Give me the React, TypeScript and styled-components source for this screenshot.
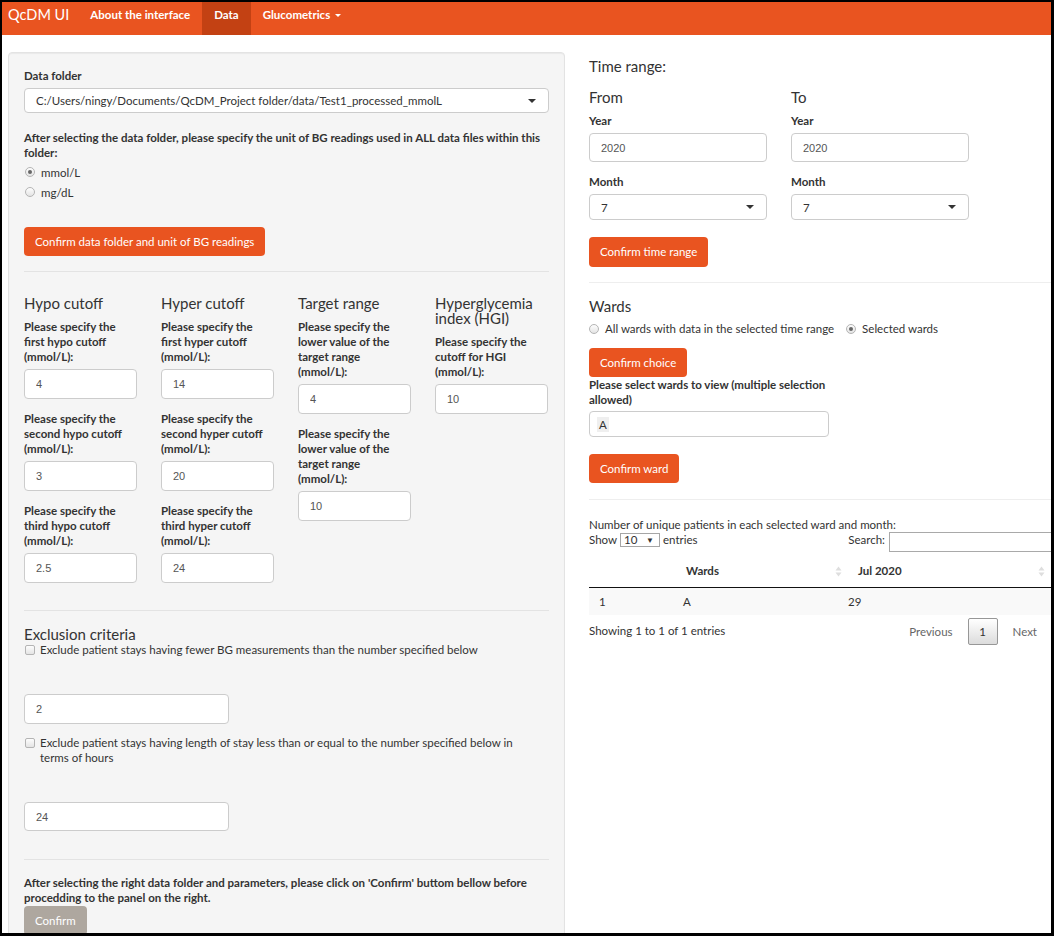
import React from 'react';
import styled, { createGlobalStyle, css } from 'styled-components';

const GlobalStyle = createGlobalStyle`
  html, body { margin: 0; padding: 0; background: #000; }
  * { box-sizing: border-box; }
`;

const Frame = styled.div`
  width: 1054px;
  height: 936px;
  border-style: solid;
  border-color: #000;
  border-width: 2px 3px 3px 2px;
  background: #fff;
  overflow: hidden;
  font-family: Lato, "Open Sans", sans-serif;
  font-size: 11.5px;
  line-height: 15px;
  color: #333;
`;

const Navbar = styled.nav`
  height: 33px;
  background: #e95420;
  display: flex;
  align-items: stretch;
`;

const Brand = styled.div`
  padding: 4px 9px 0 6px;
  font-size: 14.5px;
  line-height: 18px;
  color: #fff;
`;

const NavItem = styled.div<{ $active?: boolean }>`
  padding: 4px 12px 0;
  font-size: 11.5px;
  font-weight: 700;
  line-height: 18px;
  color: #fff;
  display: flex;
  align-items: flex-start;
  gap: 5px;
  ${(p) => p.$active && css`background: #c34113;`}
`;

const NavCaret = styled.span`
  margin-top: 8px;
  border-left: 3.5px solid transparent;
  border-right: 3.5px solid transparent;
  border-top: 3.5px solid #fff;
`;

const Main = styled.div`
  display: flex;
  align-items: flex-start;
  gap: 24px;
  padding: 17px 0 0 6px;
`;

const Well = styled.section`
  flex: none;
  width: 557px;
  background: #f5f5f5;
  border: 1px solid #e3e3e3;
  border-radius: 4px;
  box-shadow: inset 0 1px 1px rgba(0, 0, 0, 0.05);
  padding: 15px 15px 40px;
  display: flex;
  flex-direction: column;
`;

const FieldLabel = styled.div<{ $mt?: number; $mb?: number }>`
  font-weight: 700;
  line-height: 15px;
  margin-top: ${(p) => p.$mt ?? 0}px;
  margin-bottom: ${(p) => p.$mb ?? 5}px;
`;

const SelectBox = styled.div<{ $w?: number; $h?: number }>`
  width: ${(p) => (p.$w ? `${p.$w}px` : '100%')};
  height: ${(p) => p.$h ?? 25}px;
  background: #fff;
  border: 1px solid #ccc;
  border-radius: 4px;
  display: flex;
  align-items: center;
  justify-content: space-between;
  padding: 0 12px 0 11px;
  color: #333;
  font-size: 11.5px;
`;

const SelectCaret = styled.span`
  border-left: 4px solid transparent;
  border-right: 4px solid transparent;
  border-top: 4.5px solid #333;
`;

const RadioGroup = styled.div<{ $inline?: boolean }>`
  display: flex;
  flex-direction: ${(p) => (p.$inline ? 'row' : 'column')};
  gap: ${(p) => (p.$inline ? '12px' : '0')};
`;

const RadioRow = styled.label<{ $h?: number }>`
  display: flex;
  align-items: center;
  gap: 6px;
  height: ${(p) => p.$h ?? 20}px;
  font-weight: 400;
`;

const RadioDot = styled.span<{ $checked?: boolean; $ml?: number }>`
  width: 10px;
  height: 10px;
  margin-left: ${(p) => p.$ml ?? 0}px;
  border-radius: 50%;
  border: 1px solid #b4b4b4;
  background: linear-gradient(#fdfdfd, #e4e4e4);
  display: flex;
  align-items: center;
  justify-content: center;
  flex: none;
  &::after {
    content: '';
    width: 4px;
    height: 4px;
    border-radius: 50%;
    background: ${(p) => (p.$checked ? '#666' : 'transparent')};
  }
`;

const Button = styled.button<{ $gray?: boolean; $mt?: number; $h?: number }>`
  align-self: flex-start;
  height: ${(p) => p.$h ?? 29}px;
  margin-top: ${(p) => p.$mt ?? 0}px;
  padding: 0 11px;
  border: none;
  border-radius: 4px;
  background: ${(p) => (p.$gray ? '#aea79f' : '#e95420')};
  color: #fff;
  font-family: inherit;
  font-size: 11.5px;
  line-height: 15px;
  cursor: pointer;
`;

const Rule = styled.hr<{ $mt: number; $mb: number; $light?: boolean }>`
  border: none;
  border-top: 1px solid ${(p) => (p.$light ? '#eeeeee' : '#e3e3e3')};
  margin: ${(p) => p.$mt}px 0 ${(p) => p.$mb}px;
  width: 100%;
`;

const CutoffGrid = styled.div`
  display: grid;
  grid-template-columns: repeat(4, 113px);
  column-gap: 24px;
  align-items: start;
`;

const CutoffColumn = styled.div`
  display: flex;
  flex-direction: column;
`;

const ColHeading = styled.h4<{ $mb?: number }>`
  margin: 0 0 ${(p) => p.$mb ?? 8}px;
  font-size: 15px;
  font-weight: 400;
  line-height: 15px;
  color: #333;
`;

const TextInput = styled.input<{ $w?: number; $h?: number; $mt?: number; $mb?: number }>`
  width: ${(p) => (p.$w ? `${p.$w}px` : '100%')};
  height: ${(p) => p.$h ?? 30}px;
  margin: ${(p) => p.$mt ?? 0}px 0 ${(p) => p.$mb ?? 0}px;
  padding: 0 11px;
  background: #fff;
  border: 1px solid #ccc;
  border-radius: 4px;
  font-family: "Liberation Sans", Arial, sans-serif;
  font-size: 11px;
  color: #555;
  outline: none;
`;

const CheckRow = styled.label<{ $mt?: number }>`
  display: flex;
  align-items: flex-start;
  gap: 5px;
  margin-top: ${(p) => p.$mt ?? 0}px;
  line-height: 15px;
`;

const CheckBox = styled.span`
  flex: none;
  width: 10px;
  height: 10px;
  margin: 2.5px 0 0 1px;
  border: 1px solid #b4b4b4;
  border-radius: 2px;
  background: linear-gradient(#fdfdfd, #e4e4e4);
`;

const RightCol = styled.section`
  flex: 1;
  min-width: 0;
  padding-top: 6px;
  display: flex;
  flex-direction: column;
`;

const SectionTitle = styled.h3<{ $mb: number; $lh?: number }>`
  margin: 0 0 ${(p) => p.$mb}px;
  font-size: 15px;
  font-weight: 400;
  line-height: ${(p) => p.$lh ?? 15}px;
  color: #333;
`;

const TwoCols = styled.div`
  display: grid;
  grid-template-columns: 178px 178px;
  column-gap: 24px;
`;

const FieldCol = styled.div`
  display: flex;
  flex-direction: column;
`;

const MultiBox = styled.div`
  width: 240px;
  height: 26px;
  margin-top: 4px;
  background: #fff;
  border: 1px solid #ccc;
  border-radius: 4px;
  display: flex;
  align-items: center;
  padding: 0 7px;
`;

const Chip = styled.span`
  background: #efefef;
  color: #333;
  padding: 0 2px;
  line-height: 15px;
`;

const PlainText = styled.div<{ $lh?: number }>`
  line-height: ${(p) => p.$lh ?? 15}px;
`;

const TableControls = styled.div`
  display: flex;
  justify-content: space-between;
  align-items: flex-start;
  height: 20px;
`;

const ControlGroup = styled.div<{ $top?: boolean }>`
  display: flex;
  align-items: ${(p) => (p.$top ? 'flex-start' : 'center')};
  gap: 3px;
  line-height: 15px;
`;

const LengthSelect = styled.span`
  width: 40px;
  height: 14px;
  border: 1px solid #a6a6a6;
  display: inline-flex;
  align-items: center;
  justify-content: space-between;
  padding: 0 5px 0 3px;
  font-size: 11.5px;
  line-height: 12px;
  & > small { font-size: 8px; }
`;

const SearchInput = styled.input`
  width: 162px;
  height: 20px;
  margin-left: 1px;
  border: 1px solid #a9a9a9;
  border-right: none;
  outline: none;
  background: #fff;
`;

const HeadRow = styled.div`
  margin-top: 3px;
  display: grid;
  grid-template-columns: 87px 172px 1fr;
  border-bottom: 1px solid #111;
  font-weight: 700;
`;

const HeadCell = styled.div`
  padding: 10px 6px 10px 10px;
  line-height: 12px;
  display: flex;
  justify-content: space-between;
  align-items: center;
`;

const BodyRow = styled.div`
  display: grid;
  grid-template-columns: 84px 165px 1fr;
  background: #f9f9f9;
`;

const BodyCell = styled.div`
  padding: 6px 10px;
  line-height: 15px;
  color: #333;
`;

const TableFooter = styled.div`
  margin-top: 3px;
  height: 27px;
  display: flex;
  align-items: center;
  justify-content: space-between;
  & > span { margin-top: -3px; }
`;

const Pager = styled.div`
  display: flex;
  align-items: center;
  gap: 15px;
  padding-right: 14px;
`;

const PageLink = styled.span`
  color: #666;
`;

const PageCurrent = styled.span`
  width: 30px;
  height: 27px;
  border: 1px solid #979797;
  border-radius: 2px;
  background: linear-gradient(#fff, #dcdcdc);
  display: flex;
  align-items: center;
  justify-content: center;
  color: #333;
`;

const SortIcon = () => (
  <svg width="7" height="11" viewBox="0 0 7 11" aria-hidden="true">
    <path d="M3.5 0.5 L6.5 4.5 L0.5 4.5 Z" fill="#dedede" />
    <path d="M3.5 10.5 L6.5 6.5 L0.5 6.5 Z" fill="#dedede" />
  </svg>
);

type Field = { label: React.ReactNode; value: string };
type Column = { heading: React.ReactNode; fields: Field[] };

const columns: Column[] = [
  {
    heading: 'Hypo cutoff',
    fields: [
      { label: <>Please specify the<br />first hypo cutoff<br />(mmol/L):</>, value: '4' },
      { label: <>Please specify the<br />second hypo cutoff<br />(mmol/L):</>, value: '3' },
      { label: <>Please specify the<br />third hypo cutoff<br />(mmol/L):</>, value: '2.5' },
    ],
  },
  {
    heading: 'Hyper cutoff',
    fields: [
      { label: <>Please specify the<br />first hyper cutoff<br />(mmol/L):</>, value: '14' },
      { label: <>Please specify the<br />second hyper cutoff<br />(mmol/L):</>, value: '20' },
      { label: <>Please specify the<br />third hyper cutoff<br />(mmol/L):</>, value: '24' },
    ],
  },
  {
    heading: 'Target range',
    fields: [
      { label: <>Please specify the<br />lower value of the<br />target range<br />(mmol/L):</>, value: '4' },
      { label: <>Please specify the<br />lower value of the<br />target range<br />(mmol/L):</>, value: '10' },
    ],
  },
  {
    heading: <>Hyperglycemia<br />index (HGI)</>,
    fields: [
      { label: <>Please specify the<br />cutoff for HGI<br />(mmol/L):</>, value: '10' },
    ],
  },
];

export default function App() {
  return (
    <>
      <GlobalStyle />
      <Frame>
        <Navbar>
          <Brand>QcDM UI</Brand>
          <NavItem>About the interface</NavItem>
          <NavItem $active>Data</NavItem>
          <NavItem>
            Glucometrics <NavCaret />
          </NavItem>
        </Navbar>

        <Main>
          <Well>
            <FieldLabel>Data folder</FieldLabel>
            <SelectBox>
              <span>C:/Users/ningy/Documents/QcDM_Project folder/data/Test1_processed_mmolL</span>
              <SelectCaret />
            </SelectBox>
            <FieldLabel $mt={17} $mb={2}>
              After selecting the data folder, please specify the unit of BG readings used in ALL data files within this
              <br />
              folder:
            </FieldLabel>
            <RadioGroup>
              <RadioRow>
                <RadioDot $checked $ml={1} />
                mmol/L
              </RadioRow>
              <RadioRow>
                <RadioDot $ml={1} />
                mg/dL
              </RadioRow>
            </RadioGroup>
            <Button $mt={25}>Confirm data folder and unit of BG readings</Button>
            <Rule $mt={15} $mb={24} />

            <CutoffGrid>
              {columns.map((col, ci) => (
                <CutoffColumn key={ci}>
                  <ColHeading>{col.heading}</ColHeading>
                  {col.fields.map((f, fi) => (
                    <React.Fragment key={fi}>
                      <FieldLabel>{f.label}</FieldLabel>
                      <TextInput type="text" defaultValue={f.value} readOnly $mb={12} />
                    </React.Fragment>
                  ))}
                </CutoffColumn>
              ))}
            </CutoffGrid>

            <Rule $mt={15} $mb={16} />
            <ColHeading $mb={0}>Exclusion criteria</ColHeading>
            <CheckRow>
              <CheckBox />
              Exclude patient stays having fewer BG measurements than the number specified below
            </CheckRow>
            <TextInput type="text" defaultValue="2" readOnly $w={205} $h={30} $mt={37} />
            <CheckRow $mt={11}>
              <CheckBox />
              <span>
                Exclude patient stays having length of stay less than or equal to the number specified below in
                <br />
                terms of hours
              </span>
            </CheckRow>
            <TextInput type="text" defaultValue="24" readOnly $w={205} $h={29} $mt={37} />
            <Rule $mt={28} $mb={15} />
            <FieldLabel $mb={1}>
              After selecting the right data folder and parameters, please click on 'Confirm' buttom bellow before
              <br />
              procedding to the panel on the right.
            </FieldLabel>
            <Button $gray>Confirm</Button>
          </Well>

          <RightCol>
            <SectionTitle $mb={15} $lh={17}>Time range:</SectionTitle>
            <TwoCols>
              <FieldCol>
                <SectionTitle $mb={8}>From</SectionTitle>
                <FieldLabel>Year</FieldLabel>
                <TextInput type="text" defaultValue="2020" readOnly $h={29} $mb={12} />
                <FieldLabel>Month</FieldLabel>
                <SelectBox $h={26}>
                  <span>7</span>
                  <SelectCaret />
                </SelectBox>
              </FieldCol>
              <FieldCol>
                <SectionTitle $mb={8}>To</SectionTitle>
                <FieldLabel>Year</FieldLabel>
                <TextInput type="text" defaultValue="2020" readOnly $h={29} $mb={12} />
                <FieldLabel>Month</FieldLabel>
                <SelectBox $h={26}>
                  <span>7</span>
                  <SelectCaret />
                </SelectBox>
              </FieldCol>
            </TwoCols>
            <Button $mt={16.5} $h={30}>Confirm time range</Button>
            <Rule $light $mt={15.5} $mb={16} />

            <SectionTitle $mb={7}>Wards</SectionTitle>
            <RadioGroup $inline>
              <RadioRow $h={15}>
                <RadioDot />
                All wards with data in the selected time range
              </RadioRow>
              <RadioRow $h={15}>
                <RadioDot $checked />
                Selected wards
              </RadioRow>
            </RadioGroup>
            <Button $mt={12}>Confirm choice</Button>
            <FieldLabel $mb={0}>
              Please select wards to view (multiple selection
              <br />
              allowed)
            </FieldLabel>
            <MultiBox>
              <Chip>A</Chip>
            </MultiBox>
            <Button $mt={17}>Confirm ward</Button>
            <Rule $light $mt={16} $mb={18} />

            <PlainText $lh={14}>Number of unique patients in each selected ward and month:</PlainText>
            <TableControls>
              <ControlGroup>
                Show
                <LengthSelect>
                  10 <small>▼</small>
                </LengthSelect>
                entries
              </ControlGroup>
              <ControlGroup $top>
                Search:
                <SearchInput type="text" readOnly />
              </ControlGroup>
            </TableControls>
            <HeadRow>
              <HeadCell />
              <HeadCell>
                Wards <SortIcon />
              </HeadCell>
              <HeadCell>
                Jul 2020 <SortIcon />
              </HeadCell>
            </HeadRow>
            <BodyRow>
              <BodyCell>1</BodyCell>
              <BodyCell>A</BodyCell>
              <BodyCell>29</BodyCell>
            </BodyRow>
            <TableFooter>
              <span>Showing 1 to 1 of 1 entries</span>
              <Pager>
                <PageLink>Previous</PageLink>
                <PageCurrent>1</PageCurrent>
                <PageLink>Next</PageLink>
              </Pager>
            </TableFooter>
          </RightCol>
        </Main>
      </Frame>
    </>
  );
}
